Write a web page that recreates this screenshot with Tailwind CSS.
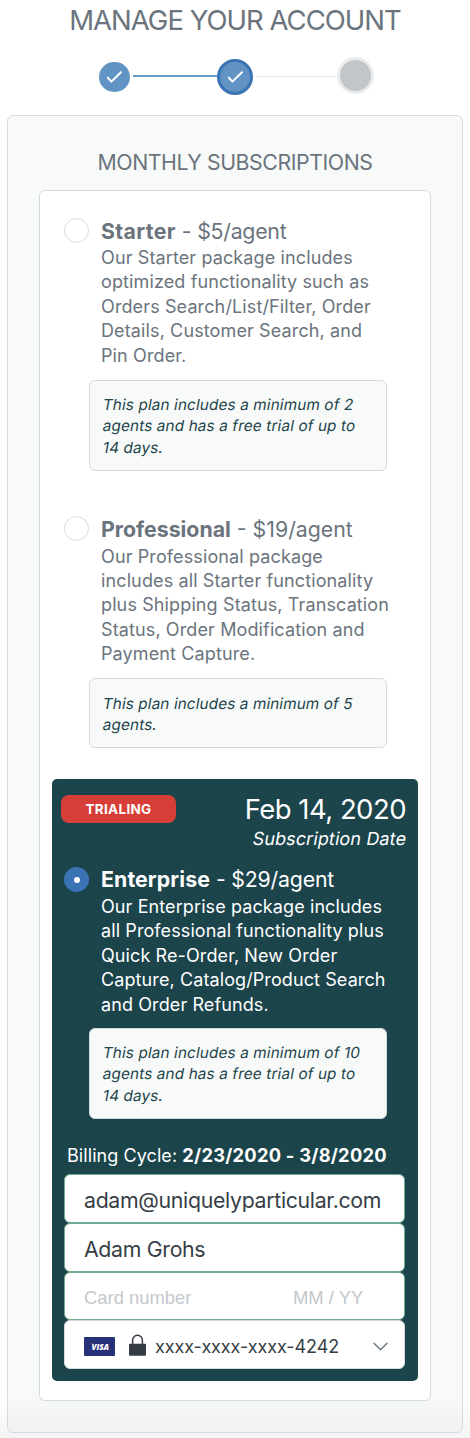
<!DOCTYPE html>
<html lang="en">
<head>
<meta charset="utf-8">
<title>Manage your account</title>
<script src="https://cdn.jsdelivr.net/npm/@tailwindcss/browser@4"></script>
</head>
<body class="w-[470px] h-[1438px] overflow-hidden bg-white bg-linear-to-b from-white from-97% to-[#f3f4f4] font-['Inter',sans-serif] text-[#6b747d]">
<div class="flex flex-col h-full">
  <h1 class="h-10 text-center text-[27.5px] leading-[40px] tracking-[-0.98px] whitespace-nowrap">MANAGE YOUR ACCOUNT</h1>

  <div class="mt-[18px] h-[57px] pl-[99px] flex items-start">
    <div class="mt-[4px] w-[31px] h-[30px] rounded-full bg-[#6193c4] flex items-center justify-center">
      <svg class="w-[17px] h-[14px]" viewBox="0 0 17 14" fill="none" stroke="#fff" stroke-width="2" stroke-linecap="round" stroke-linejoin="round"><path d="M1.8 7.8 5.4 11.6 15 2.2"/></svg>
    </div>
    <div class="mt-[17px] ml-[3px] w-[84px] h-[2px] bg-[#6a9acb]"></div>
    <div class="mt-px size-[36px] rounded-full bg-[#6193c4] border-[3px] border-[#3a74b4] flex items-center justify-center">
      <svg class="w-[17px] h-[14px]" viewBox="0 0 17 14" fill="none" stroke="#fff" stroke-width="2" stroke-linecap="round" stroke-linejoin="round"><path d="M1.8 7.8 5.4 11.6 15 2.2"/></svg>
    </div>
    <div class="mt-[18px] w-[84px] h-px bg-[#e9ebec]"></div>
    <div class="-mt-px size-[37px] rounded-full bg-[#c1c6ca] border-[3px] border-[#e9ebec]"></div>
  </div>

  <main class="ml-[7px] w-[456px] h-[1318px] shrink-0 rounded-[6px] border border-[#d5dadc] bg-linear-to-b from-[#f8faf9] from-97% to-[#f0f2f2] pl-[31px]">
    <h2 class="-ml-[31px] h-[74px] pt-[31px] text-center text-[21.3px] leading-[30px] tracking-[-0.43px] whitespace-nowrap">MONTHLY SUBSCRIPTIONS</h2>
    <div class="w-[392px] h-[1211px] rounded-[6px] border border-[#d5dadc] bg-white pl-[12px] pt-[12px]">

      <section class="w-[366px] h-[298px] pl-[12px] pt-[15px]">
        <div class="flex items-start gap-[12px]">
          <div class="size-[25px] rounded-full border border-[#d8dcde] bg-white"></div>
          <div class="whitespace-nowrap">
            <h3 class="text-[21.3px] leading-[26px]"><b class="tracking-[0.37px]">Starter</b> <span class="tracking-[-0.25px]">- $5/agent</span></h3>
            <div class="mt-[2px] text-[18px] leading-[24.4px] tracking-[0.12px]">
              <p>Our Starter package includes</p>
              <p>optimized functionality such as</p>
              <p>Orders Search/List/Filter, Order</p>
              <p>Details, Customer Search, and</p>
              <p>Pin Order.</p>
            </div>
          </div>
        </div>
        <div class="mt-[12px] ml-[25px] w-[298px] h-[91px] rounded-[6px] border border-[#d5dadc] bg-[#f8faf9] text-[#1d444c] px-[13px] pt-[13px] text-[15.3px] leading-[21.3px] tracking-[0.13px] whitespace-nowrap">
          <p class="-skew-x-10">This plan includes a minimum of 2</p>
          <p class="-skew-x-10">agents and has a free trial of up to</p>
          <p class="-skew-x-10">14 days.</p>
        </div>
      </section>

      <section class="w-[366px] h-[278px] pl-[12px] pt-[15px]">
        <div class="flex items-start gap-[12px]">
          <div class="size-[25px] rounded-full border border-[#d8dcde] bg-white"></div>
          <div class="whitespace-nowrap">
            <h3 class="text-[21.3px] leading-[26px]"><b>Professional</b> <span>- $19/agent</span></h3>
            <div class="mt-[2.5px] text-[18px] leading-[24.4px] tracking-[0.12px]">
              <p>Our Professional package</p>
              <p>includes all Starter functionality</p>
              <p>plus Shipping Status, Transcation</p>
              <p>Status, Order Modification and</p>
              <p>Payment Capture.</p>
            </div>
          </div>
        </div>
        <div class="mt-[11.5px] ml-[25px] w-[298px] h-[70px] rounded-[6px] border border-[#d5dadc] bg-[#f8faf9] text-[#1d444c] px-[13px] pt-[13.5px] text-[15.3px] leading-[21.3px] tracking-[0.11px] whitespace-nowrap">
          <p class="-skew-x-10">This plan includes a minimum of 5</p>
          <p class="-skew-x-10">agents.</p>
        </div>
      </section>

      <section class="w-[366px] h-[602px] rounded-[5px] bg-[#1c444b] text-white pl-[12px] pt-[16px]">
        <div class="-ml-[3px] flex justify-between pr-[12px] h-[72px] whitespace-nowrap">
          <div class="w-[115px] h-[28px] rounded-[8px] bg-[#d63e37] text-center text-[13.5px] leading-[28px] font-bold tracking-[0.32px]">TRIALING</div>
          <div class="text-right">
            <div class="text-[27.5px] leading-[28px] tracking-[-0.53px]">Feb 14, 2020</div>
            <div class="text-[18px] leading-[32px] tracking-[0.12px] -skew-x-10">Subscription Date</div>
          </div>
        </div>
        <div class="flex items-start gap-[12px]">
          <div class="size-[25px] rounded-full bg-[#3a74b4] flex items-center justify-center"><div class="size-[6px] rounded-full bg-white"></div></div>
          <div class="whitespace-nowrap">
            <h3 class="-mt-px text-[21.3px] leading-[26px]"><b class="tracking-[0.1px]">Enterprise</b> <span class="tracking-[-0.2px]">- $29/agent</span></h3>
            <div class="mt-[3px] text-[18px] leading-[24.4px] tracking-[0.1px]">
              <p>Our Enterprise package includes</p>
              <p>all Professional functionality plus</p>
              <p>Quick Re-Order, New Order</p>
              <p>Capture, Catalog/Product Search</p>
              <p>and Order Refunds.</p>
            </div>
          </div>
        </div>
        <div class="mt-[11px] ml-[25px] w-[298px] h-[91px] rounded-[6px] border border-[#d5dadc] bg-[#f8faf9] text-[#1d444c] px-[13px] pt-[13px] text-[15.3px] leading-[21.3px] tracking-[0.13px] whitespace-nowrap">
          <p class="-skew-x-10">This plan includes a minimum of 10</p>
          <p class="-skew-x-10">agents and has a free trial of up to</p>
          <p class="-skew-x-10">14 days.</p>
        </div>
        <p class="mt-[22px] pl-[3px] text-[18px] leading-[28px] tracking-[0.07px] whitespace-nowrap">Billing Cycle: <b class="text-[18.3px] tracking-[0.25px]">2/23/2020 - 3/8/2020</b></p>
        <div class="mt-[4px] w-[341px] text-[#363e46] text-[21.3px] leading-[50px] tracking-[-0.32px] whitespace-nowrap">
          <div class="h-[49px] rounded-[6px] border border-[#6fab90] bg-white pl-[19px]">adam@uniquelyparticular.com</div>
          <div class="h-[49px] rounded-[6px] border border-[#6fab90] bg-white pl-[19px]">Adam Grohs</div>
          <div class="h-[48px] rounded-[6px] border border-[#6fab90] bg-white pl-[19px] flex font-['Liberation_Sans',sans-serif] text-[18.4px] tracking-normal text-[#c3c8cd]"><span class="w-[209px]">Card number</span><span>MM / YY</span></div>
          <div class="h-[49px] rounded-[6px] border border-[#d5dadc] bg-white pt-[4px] pl-[19px] pr-[16px] flex items-center text-[18px] tracking-[-0.08px]">
            <svg class="w-[31px] h-[19px] shrink-0" viewBox="0 0 31 19"><rect width="31" height="19" rx="1" fill="#273178"/><text x="7.5" y="12.6" font-family="Open Sans, sans-serif" font-size="8.3" font-weight="800" font-style="italic" fill="#fff" textLength="17.5" lengthAdjust="spacingAndGlyphs">VISA</text><path d="M6.8 6.5h2.2l.8 2.2q-.8-1.6-3-2.2z" fill="#e29a45"/></svg>
            <svg class="ml-[14px] -mt-[3px] w-[17px] h-[22px] shrink-0" viewBox="0 0 17 22"><path d="M3.6 10V6.2a4.9 4.9 0 0 1 9.8 0V10" fill="none" stroke="#343b43" stroke-width="1.5"/><rect y="9.8" width="17" height="12" rx="1" fill="#343b43"/></svg>
            <span class="ml-[9px]">xxxx-xxxx-xxxx-4242</span>
            <svg class="ml-auto w-[15px] h-[9px] shrink-0" viewBox="0 0 15 9" fill="none" stroke="#6b747d" stroke-width="1.4" stroke-linecap="round" stroke-linejoin="round"><path d="M1 1.2 7.5 7.7 14 1.2"/></svg>
          </div>
        </div>
      </section>
    </div>
  </main>
</div>
</body>
</html>
